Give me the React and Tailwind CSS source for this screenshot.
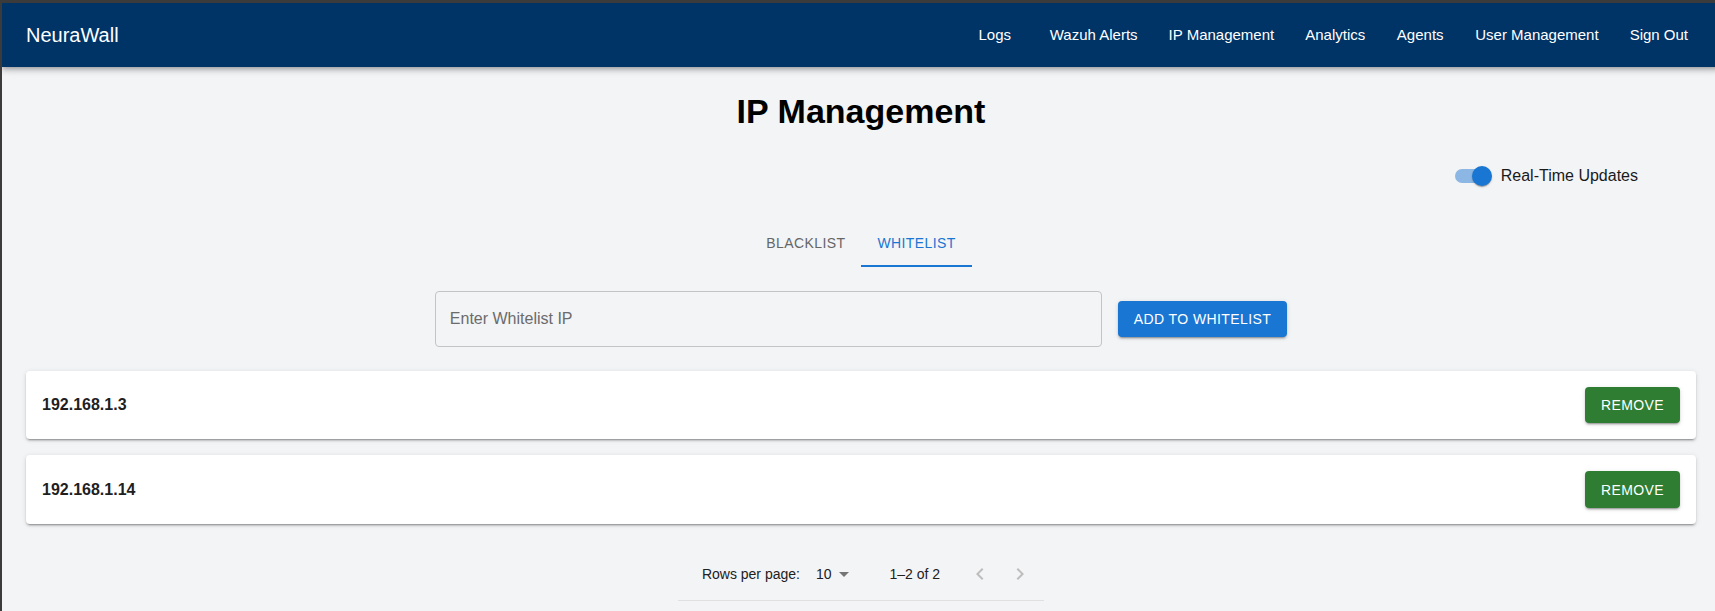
import React, { useState } from "react";

const navLinks = ["Logs", "Wazuh Alerts", "IP Management", "Analytics", "Agents", "User Management", "Sign Out"];

const cardShadow =
	"shadow-[0_3px_1px_-2px_rgba(0,0,0,0.2),0_2px_2px_0_rgba(0,0,0,0.14),0_1px_5px_0_rgba(0,0,0,0.12)]";

function App() {
	const [tab, setTab] = useState("whitelist");
	const [ips] = useState(["192.168.1.3", "192.168.1.14"]);

	return (
		<div className="min-h-screen overflow-hidden border-t-[3px] border-l-2 border-[#3b3b3b] bg-gray-100 font-['Liberation_Sans',Arial,sans-serif]">
			<div className="w-[1718px]">
				{/* Top bar */}
				<header className="relative z-10 flex h-16 items-center bg-[#003366] pl-6 pr-6 text-white shadow-[0_2px_4px_-1px_rgba(0,0,0,0.2),0_4px_5px_0_rgba(0,0,0,0.14),0_1px_10px_0_rgba(0,0,0,0.12)]">
					<div className="flex-1 text-[20px] leading-[1.6]">NeuraWall</div>
					<nav className="flex gap-[15px]">
						{navLinks.map((link) => (
							<button key={link} className="min-w-16 px-2 py-1.5 text-[15px] leading-[1.75] text-white">
								{link}
							</button>
						))}
					</nav>
				</header>

				<main className="px-6 pt-6">
					<h1 className="text-center text-[34px] font-bold leading-[1.235] text-black">IP Management</h1>

					{/* Real-time toggle */}
					<div className="mt-6 mr-[58px] flex justify-end">
						<label className="flex h-[38px] items-center">
							<span className="flex h-[38px] w-[58px] items-center justify-center">
								<span className="relative h-[14px] w-[34px] rounded-full bg-[#8cb6e4]">
									<span className="absolute -top-[3px] -right-[3px] size-5 rounded-full bg-[#1976d2] shadow-[0_2px_1px_-1px_rgba(0,0,0,0.2),0_1px_1px_0_rgba(0,0,0,0.14),0_1px_3px_0_rgba(0,0,0,0.12)]" />
								</span>
							</span>
							<span className="text-base leading-normal text-[#1a1a1a]">Real-Time Updates</span>
						</label>
					</div>

					{/* Tabs */}
					<div className="mt-6 flex justify-center">
						{["blacklist", "whitelist"].map((t) => (
							<button
								key={t}
								onClick={() => setTab(t)}
								className={`flex h-12 min-w-[90px] items-center justify-center border-b-2 px-4 pt-[2px] text-sm uppercase tracking-[0.4px] ${
									tab === t ? "border-[#1976d2] text-[#1976d2]" : "border-transparent text-[#666666]"
								}`}
							>
								{t}
							</button>
						))}
					</div>

					{/* Add IP */}
					<div className="mt-6 flex items-center justify-center gap-4">
						<input
							placeholder="Enter Whitelist IP"
							className="h-14 w-[667px] rounded border border-[#c4c4c4] bg-transparent px-[14px] text-base text-[#212121] outline-none placeholder:text-[#6b6b6b]"
						/>
						<button className={`h-[36.5px] rounded bg-[#1976d2] px-4 text-sm uppercase tracking-[0.4px] text-white ${cardShadow}`}>
							Add to Whitelist
						</button>
					</div>

					{/* IP list */}
					<div className="mt-6 flex flex-col gap-4">
						{ips.map((ip) => (
							<div key={ip} className={`flex items-center justify-between rounded bg-white p-4 ${cardShadow}`}>
								<span className="text-base font-bold text-[#1f1f1f]">{ip}</span>
								<button className={`h-[36.5px] rounded bg-[#2e7d32] px-4 text-sm uppercase tracking-[0.4px] text-white ${cardShadow}`}>
									Remove
								</button>
							</div>
						))}
					</div>

					{/* Pagination */}
					<div className="mt-6 flex justify-center">
						<div className="flex h-[53px] items-center border-b border-[#e0e0e0] pl-6 pr-1 text-sm text-[#212121]">
							<span>Rows per page:</span>
							<span className="relative ml-2 mr-[34px] flex items-center pl-2 pr-6">
								10
								<svg viewBox="0 0 24 24" className="absolute right-0 size-6 fill-[#757575]">
									<path d="M7 10l5 5 5-5z" />
								</svg>
							</span>
							<span>1–2 of 2</span>
							<div className="ml-5 flex">
								<button className="p-2">
									<svg viewBox="0 0 24 24" className="size-6 fill-[#bdbdbd]">
										<path d="M15.41 7.41 14 6l-6 6 6 6 1.41-1.41L10.83 12z" />
									</svg>
								</button>
								<button className="p-2">
									<svg viewBox="0 0 24 24" className="size-6 fill-[#bdbdbd]">
										<path d="M10 6 8.59 7.41 13.17 12l-4.58 4.59L10 18l6-6z" />
									</svg>
								</button>
							</div>
						</div>
					</div>
				</main>
			</div>
		</div>
	);
}

export default App;
